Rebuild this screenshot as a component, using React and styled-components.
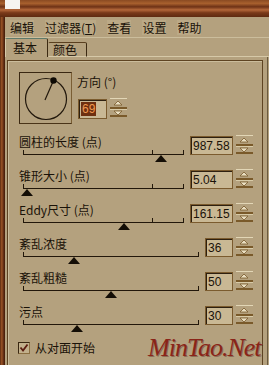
import styled, { createGlobalStyle } from 'styled-components';

const GlobalStyle = createGlobalStyle`
  body {
    margin: 0;
    background: #b4a17e;
    font-family: 'Noto Sans CJK SC', 'Noto Sans', sans-serif;
  }
`;

const rows = [
  { label: '圆柱的长度 (点)', value: '987.58', wide: true, pos: 138, mid: true },
  { label: '锥形大小 (点)', value: '5.04', wide: true, pos: 4, mid: true },
  { label: 'Eddy尺寸 (点)', value: '161.15', wide: true, pos: 101, mid: true },
  { label: '紊乱浓度', value: '36', pos: 51 },
  { label: '紊乱粗糙', value: '50', pos: 88 },
  { label: '污点', value: '30', pos: 54 },
];

const menu = ['编辑', '过滤器', '查看', '设置', '帮助'];

function Spinner() {
  return (
    <SpinBox>
      <svg width="17" height="19" viewBox="0 0 17 19">
        <rect x="0" y="0" width="17" height="1" fill="#e2d6b6" />
        <polygon points="4,7 12,7 8,3" fill="#eadfc2" stroke="#7a5a2c" strokeWidth="0.8" />
        <rect x="0" y="9" width="17" height="2" fill="#7a5a2a" />
        <rect x="0" y="11" width="17" height="1" fill="#d8cba8" />
        <polygon points="4,13 12,13 8,17" fill="#eadfc2" stroke="#7a5a2c" strokeWidth="0.8" />
        <rect x="0" y="17" width="17" height="2" fill="#7a5a2a" />
      </svg>
    </SpinBox>
  );
}

function SliderRow({ label, value, wide, pos, mid }) {
  return (
    <Row>
      <SliderCol>
        <Label>{label}</Label>
        <Track>
          {mid && <MidTick />}
          <Thumb $pos={pos} />
        </Track>
      </SliderCol>
      <ValueBox $wide={wide}>{value}</ValueBox>
      <Spinner />
    </Row>
  );
}

export default function App() {
  return (
    <>
      <GlobalStyle />
      <Frame>
        <TitleStrip>
          <WhiteSquare />
        </TitleStrip>
        <Body>
          <LeftWood />
          <Main>
            <MenuBar>
              {menu.map((m) => (
                <MenuItem key={m}>
                  {m}
                  {m === '过滤器' && (
                    <>
                      (<u>T</u>)
                    </>
                  )}
                </MenuItem>
              ))}
            </MenuBar>
            <TabsRow>
              <Tab $active>基本</Tab>
              <Tab>颜色</Tab>
              <TabFill />
            </TabsRow>
            <TabPanel>
              <GroupBox>
                <DialRow>
                  <DialBox>
                    <svg width="51" height="50" viewBox="0 0 51 50">
                      <circle cx="26" cy="26" r="20.5" fill="none" stroke="#22180c" strokeWidth="1.2" />
                      <line x1="25" y1="27" x2="33.5" y2="7.5" stroke="#22180c" strokeWidth="1.2" />
                      <circle cx="33.5" cy="7.5" r="3.2" fill="#0e0a04" />
                    </svg>
                  </DialBox>
                  <DirectionCol>
                    <Label>方向 (°)</Label>
                    <InputRow>
                      <AngleBox>
                        <Selected>69</Selected>
                      </AngleBox>
                      <Spinner />
                    </InputRow>
                  </DirectionCol>
                </DialRow>
                <Rows>
                  {rows.map((r) => (
                    <SliderRow key={r.label} {...r} />
                  ))}
                </Rows>
                <CheckRow>
                  <CheckBox>
                    <svg width="10" height="10" viewBox="0 0 10 10">
                      <polyline points="1.5,4.5 4,7.5 8.5,1.5" fill="none" stroke="#5a1c10" strokeWidth="1.8" />
                    </svg>
                  </CheckBox>
                  <Label>从对面开始</Label>
                </CheckRow>
              </GroupBox>
              <RightEdge />
            </TabPanel>
          </Main>
        </Body>
        <Watermark>MinTao.Net</Watermark>
      </Frame>
    </>
  );
}

const Frame = styled.div`
  position: relative;
  width: 269px;
  height: 365px;
  overflow: hidden;
  display: flex;
  flex-direction: column;
  color: #1a1208;
`;

const TitleStrip = styled.div`
  height: 17px;
  flex-shrink: 0;
  background: linear-gradient(
    180deg,
    #8a4a22 0%,
    #a8602e 20%,
    #6e3216 40%,
    #b4683a 58%,
    #7a3a1a 75%,
    #5e2a10 100%
  );
`;

const WhiteSquare = styled.div`
  margin-left: 5px;
  width: 15px;
  height: 9px;
  background: #f6f4f0;
`;

const Body = styled.div`
  flex: 1;
  display: flex;
`;

const LeftWood = styled.div`
  width: 5px;
  background: linear-gradient(90deg, #5a2a10 0%, #9a5426 35%, #6a3216 65%, #3e1a08 100%);
`;

const Main = styled.div`
  flex: 1;
  display: flex;
  flex-direction: column;
  background: #b4a17e;
`;

const MenuBar = styled.div`
  height: 20px;
  display: flex;
  align-items: center;
  gap: 11px;
  padding-left: 5px;
  border-bottom: 1px solid #cbbd9c;
`;

const MenuItem = styled.div`
  font-size: 12px;
  line-height: 15px;
  background: #bba986;
  white-space: nowrap;

  u {
    text-decoration: underline;
  }
`;

const TabsRow = styled.div`
  height: 19px;
  display: flex;
  align-items: flex-end;
`;

const Tab = styled.div`
  height: ${(p) => (p.$active ? '19px' : '15px')};
  width: ${(p) => (p.$active ? '43px' : '39px')};
  box-sizing: border-box;
  padding-left: ${(p) => (p.$active ? '7px' : '4px')};
  font-size: 12px;
  line-height: ${(p) => (p.$active ? '18px' : '14px')};
  background: #b4a17e;
  border-top: 1px solid ${(p) => (p.$active ? '#5f7a6a' : '#5a4020')};
  border-left: 1px solid ${(p) => (p.$active ? '#d6c9a8' : '#b4a17e')};
  border-right: 1px solid #3c2a12;
  border-bottom: ${(p) => (p.$active ? 'none' : '1px solid #d6c9a8')};
  border-radius: 2px 2px 0 0;
`;

const TabFill = styled.div`
  flex: 1;
  border-bottom: 1px solid #d6c9a8;
`;

const TabPanel = styled.div`
  flex: 1;
  display: flex;
  align-items: flex-start;
`;

const GroupBox = styled.div`
  margin: 3px 0 0 2px;
  width: 256px;
  height: 320px;
  box-sizing: border-box;
  border: 1px solid #5e4422;
  border-bottom: none;
  box-shadow: inset 1px 1px 0 #cbbd9c;
  padding: 11px 9px 0 11px;
  display: flex;
  flex-direction: column;
`;

const RightEdge = styled.div`
  margin-left: 4px;
  align-self: stretch;
  width: 1px;
  background: #6a5a3e;
`;

const DialRow = styled.div`
  display: flex;
  height: 52px;
`;

const DialBox = styled.div`
  width: 53px;
  height: 52px;
  box-sizing: border-box;
  border: 1px solid #3a2812;
  border-right-color: #7a5e34;
  border-bottom-color: #4a3418;
  display: flex;
`;

const DirectionCol = styled.div`
  margin-left: 5px;
  padding-top: 3px;
  display: flex;
  flex-direction: column;
`;

const InputRow = styled.div`
  display: flex;
  align-items: flex-start;
  margin-top: 9px;
`;

const AngleBox = styled.div`
  margin: 1px 0 0 1px;
  width: 29px;
  height: 20px;
  box-sizing: border-box;
  background: #c9b894;
  border: 1px solid #7b5b2e;
  box-shadow: inset 1px 1px 0 #2e2010;
  padding: 2px 0 0 2px;
  display: flex;
  align-items: flex-start;
`;

const Selected = styled.span`
  background: #6e3010;
  color: #f09a50;
  font-family: 'Liberation Sans', sans-serif;
  font-size: 12px;
  line-height: 14px;
  padding: 0 1px;
`;

const Rows = styled.div`
  margin-top: 11px;
  display: flex;
  flex-direction: column;
`;

const Row = styled.div`
  display: flex;
  height: 34px;
  align-items: flex-start;
`;

const SliderCol = styled.div`
  flex: 1;
  display: flex;
  flex-direction: column;
`;

const Label = styled.div`
  height: 14px;
  font-size: 12px;
  line-height: 14px;
  white-space: nowrap;
  color: #1a1208;
`;

const Track = styled.div`
  position: relative;
  margin: 1px 0 0 4px;
  height: 5px;
  box-sizing: border-box;
  border-bottom: 1px solid #22170a;

  &::before,
  &::after {
    content: '';
    position: absolute;
    top: 0;
    width: 1px;
    height: 4px;
    background: #22170a;
  }
  &::before {
    left: 0;
  }
  &::after {
    right: 0;
  }
`;

const MidTick = styled.div`
  position: absolute;
  left: 129px;
  top: 0;
  width: 1px;
  height: 4px;
  background: #22170a;
`;

const Thumb = styled.div`
  position: absolute;
  top: 5px;
  left: ${(p) => p.$pos - 6}px;
  width: 0;
  height: 0;
  border-left: 6px solid transparent;
  border-right: 6px solid transparent;
  border-bottom: 7px solid #140e06;
`;

const ValueBox = styled.div`
  margin: 1px 0 0 6px;
  width: ${(p) => (p.$wide ? '43px' : '28px')};
  height: 19px;
  box-sizing: border-box;
  background: #c9b894;
  border: 1px solid #7b5b2e;
  box-shadow: inset 1px 1px 0 #2e2010;
  padding-left: 2px;
  font-family: 'Liberation Sans', sans-serif;
  font-size: 12px;
  line-height: 18px;
  color: #1a1208;
`;

const SpinBox = styled.div`
  margin-left: 3px;
  width: 17px;
  height: 19px;
  display: flex;
`;

const CheckRow = styled.div`
  margin-top: 2px;
  display: flex;
  align-items: center;
  gap: 5px;
  margin-left: -1px;
`;

const CheckBox = styled.div`
  width: 12px;
  height: 12px;
  box-sizing: border-box;
  border: 1px solid #3a2812;
  border-right-color: #8a6e40;
  border-bottom-color: #8a6e40;
  background: #c2b08c;
  display: flex;
  align-items: center;
  justify-content: center;
`;

const Watermark = styled.div`
  position: absolute;
  left: 148px;
  top: 335px;
  font-family: 'Liberation Serif', serif;
  font-style: italic;
  font-size: 26px;
  line-height: 26px;
  letter-spacing: -1px;
  color: #8a2418;
  text-shadow: 1px 1px 0 rgba(60, 10, 5, 0.35);
  pointer-events: none;
`;
